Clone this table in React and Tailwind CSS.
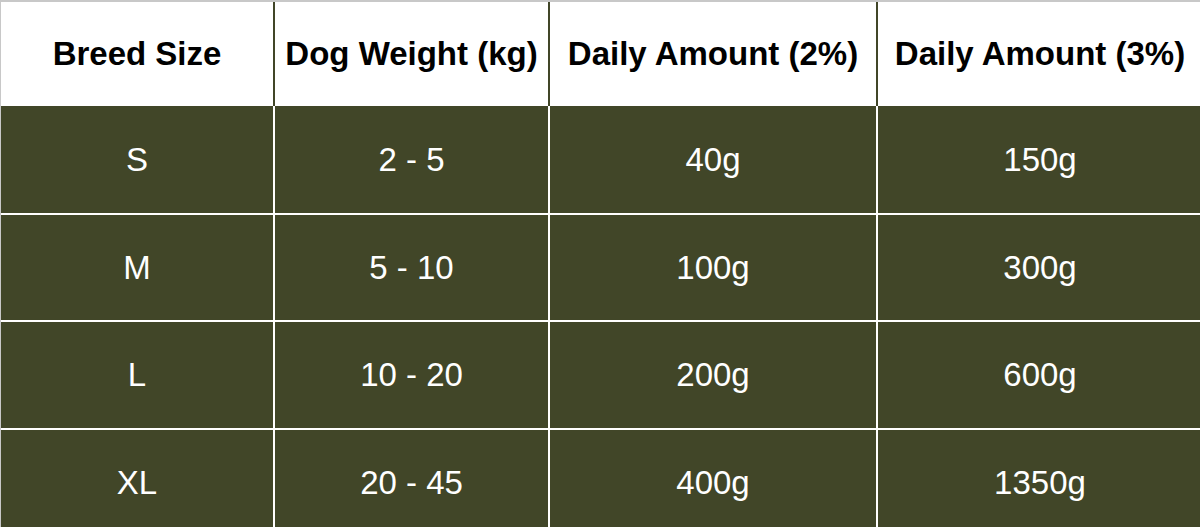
export default function App() {
  const cols = ["w-[272px]", "w-[273px]", "w-[326px]", "w-[324px]"];
  const header = ["Breed Size", "Dog Weight (kg)", "Daily Amount (2%)", "Daily Amount (3%)"];
  const rows = [
    ["S", "2 - 5", "40g", "150g"],
    ["M", "5 - 10", "100g", "300g"],
    ["L", "10 - 20", "200g", "600g"],
    ["XL", "20 - 45", "400g", "1350g"],
  ];
  const heights = ["h-[107px]", "h-[105px]", "h-[106px]", "h-[106px]"];
  return (
    <div
      className="w-[1200px] h-[527px] overflow-hidden bg-[#c8c8c8] pt-[2px] pl-[1px]"
      style={{ fontFamily: '"Liberation Sans", Arial, sans-serif' }}
    >
      <div className="flex flex-col w-[1205px]">
        <div className="flex gap-[2px] bg-[#414628] h-[104px] shrink-0">
          {header.map((h, i) => (
            <div
              key={i}
              className={`${cols[i]} shrink-0 bg-white flex items-center justify-center text-[33px] font-bold text-black whitespace-nowrap`}
            >
              {h}
            </div>
          ))}
        </div>
        <div className="flex flex-col gap-[2px] bg-white">
          {rows.map((r, ri) => (
            <div key={ri} className={`flex gap-[2px] ${heights[ri]} shrink-0`}>
              {r.map((c, i) => (
                <div
                  key={i}
                  className={`${cols[i]} shrink-0 bg-[#414628] flex items-center justify-center text-[33px] text-white whitespace-nowrap`}
                >
                  {c}
                </div>
              ))}
            </div>
          ))}
        </div>
      </div>
    </div>
  );
}
